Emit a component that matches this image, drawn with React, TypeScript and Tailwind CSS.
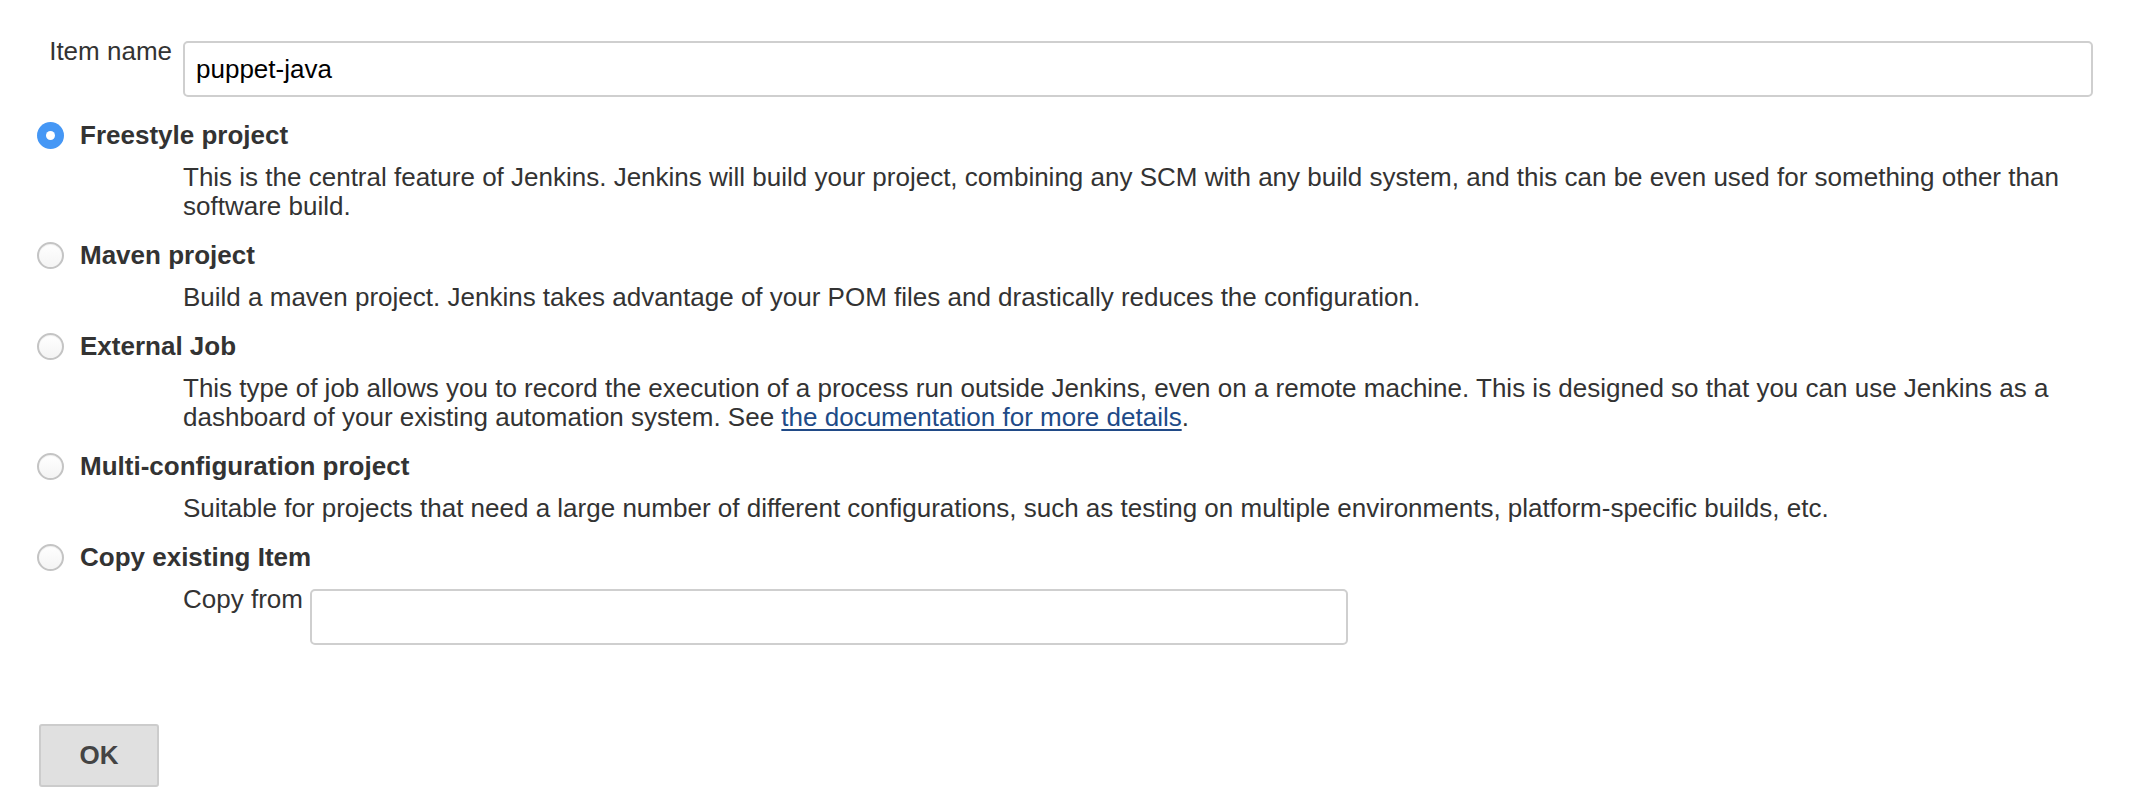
import type { ReactNode } from 'react'

type Item = {
  id: string
  title: string
  checked?: boolean
  desc: ReactNode
}

const items: Item[] = [
  {
    id: 'freestyle',
    title: 'Freestyle project',
    checked: true,
    desc: 'This is the central feature of Jenkins. Jenkins will build your project, combining any SCM with any build system, and this can be even used for something other than software build.',
  },
  {
    id: 'maven',
    title: 'Maven project',
    desc: 'Build a maven project. Jenkins takes advantage of your POM files and drastically reduces the configuration.',
  },
  {
    id: 'external',
    title: 'External Job',
    desc: (
      <>
        This type of job allows you to record the execution of a process run outside Jenkins, even on a remote
        machine. This is designed so that you can use Jenkins as a dashboard of your existing automation system. See{' '}
        <a href="#" className="text-[#204a87] underline underline-offset-[3px]">
          the documentation for more details
        </a>
        .
      </>
    ),
  },
  {
    id: 'matrix',
    title: 'Multi-configuration project',
    desc: 'Suitable for projects that need a large number of different configurations, such as testing on multiple environments, platform-specific builds, etc.',
  },
]

function Radio({ checked }: { checked?: boolean }) {
  if (checked) {
    return (
      <span className="flex h-[27px] w-[27px] items-center justify-center rounded-full bg-[#4597f5]">
        <span className="h-[9px] w-[9px] rounded-full bg-white" />
      </span>
    )
  }
  return (
    <span className="block h-[27px] w-[27px] rounded-full border-2 border-[#c4c4c4] bg-gradient-to-b from-white to-[#f4f4f4] shadow-[inset_0_1px_1px_rgba(0,0,0,0.06)]" />
  )
}

function OptionTitle({ title, checked }: { title: string; checked?: boolean }) {
  return (
    <label className="flex h-[29px] items-center">
      <span className="flex w-[80px] pl-[37px]">
        <Radio checked={checked} />
      </span>
      <span className="font-bold">{title}</span>
    </label>
  )
}

export default function App() {
  return (
    <div className="min-h-screen bg-white text-[26px] leading-[29px] text-[#333] font-['Liberation_Sans',Helvetica,Arial,sans-serif]">
      <div className="w-[2093px] pt-[37px]">
        {/* Item name */}
        <div className="flex items-start">
          <div className="w-[183px] pr-[11px] text-right">Item name</div>
          <input
            readOnly
            value="puppet-java"
            className="mt-[4px] h-[56px] flex-1 rounded-[5px] border-2 border-[#cfcfcf] px-[11px] text-[26px] text-black outline-none"
          />
        </div>

        {/* Job types */}
        <div className="mt-[24px] flex flex-col gap-[20px]">
          {items.map((it) => (
            <div key={it.id}>
              <OptionTitle title={it.title} checked={it.checked} />
              <p className="mt-[13px] pl-[183px]">{it.desc}</p>
            </div>
          ))}

          <div>
            <OptionTitle title="Copy existing Item" />
            <div className="mt-[13px] flex items-start pl-[183px]">
              <span className="pr-[7px]">Copy from</span>
              <input
                readOnly
                className="mt-[4px] h-[56px] w-[1038px] rounded-[5px] border-2 border-[#cfcfcf] px-[11px] text-[26px] outline-none"
              />
            </div>
          </div>
        </div>

        {/* Submit */}
        <div className="mt-[79px] pl-[39px]">
          <button className="h-[63px] w-[120px] rounded-[3px] border-2 border-[#cccccc] bg-[#e0e0e0] text-[26px] font-bold text-[#444]">
            OK
          </button>
        </div>
      </div>
    </div>
  )
}
